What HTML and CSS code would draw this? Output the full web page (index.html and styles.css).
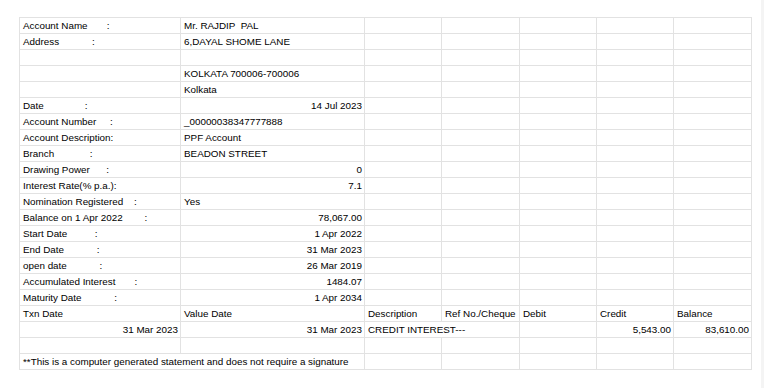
FILE: index.html
```html
<!DOCTYPE html>
<html>
<head>
<meta charset="utf-8">
<link rel="stylesheet" href="styles.css">
</head>
<body>
<table class="sheet">
<colgroup>
<col class="c1"><col class="c2"><col class="c3"><col class="c4"><col class="c5"><col class="c6"><col class="c7">
</colgroup>
<tr><td class="lbl">Account Name       :</td><td class="lbl">Mr. RAJDIP  PAL</td><td></td><td></td><td></td><td></td><td></td></tr>
<tr><td class="lbl">Address            :</td><td>6,DAYAL SHOME LANE</td><td></td><td></td><td></td><td></td><td></td></tr>
<tr><td></td><td></td><td></td><td></td><td></td><td></td><td></td></tr>
<tr><td></td><td>KOLKATA 700006-700006</td><td></td><td></td><td></td><td></td><td></td></tr>
<tr><td></td><td>Kolkata</td><td></td><td></td><td></td><td></td><td></td></tr>
<tr><td class="lbl">Date               :</td><td class="r">14 Jul 2023</td><td></td><td></td><td></td><td></td><td></td></tr>
<tr><td class="lbl">Account Number     :</td><td>_00000038347777888</td><td></td><td></td><td></td><td></td><td></td></tr>
<tr><td class="lbl">Account Description:</td><td>PPF Account</td><td></td><td></td><td></td><td></td><td></td></tr>
<tr><td class="lbl">Branch             :</td><td>BEADON STREET</td><td></td><td></td><td></td><td></td><td></td></tr>
<tr><td class="lbl">Drawing Power      :</td><td class="r">0</td><td></td><td></td><td></td><td></td><td></td></tr>
<tr><td class="lbl">Interest Rate(% p.a.):</td><td class="r">7.1</td><td></td><td></td><td></td><td></td><td></td></tr>
<tr><td class="lbl">Nomination Registered    :</td><td>Yes</td><td></td><td></td><td></td><td></td><td></td></tr>
<tr><td class="lbl">Balance on 1 Apr 2022        :</td><td class="r">78,067.00</td><td></td><td></td><td></td><td></td><td></td></tr>
<tr><td class="lbl">Start Date          :</td><td class="r">1 Apr 2022</td><td></td><td></td><td></td><td></td><td></td></tr>
<tr><td class="lbl">End Date            :</td><td class="r">31 Mar 2023</td><td></td><td></td><td></td><td></td><td></td></tr>
<tr><td class="lbl">open date            :</td><td class="r">26 Mar 2019</td><td></td><td></td><td></td><td></td><td></td></tr>
<tr><td class="lbl">Accumulated Interest       :</td><td class="r">1484.07</td><td></td><td></td><td></td><td></td><td></td></tr>
<tr><td class="lbl">Maturity Date            :</td><td class="r">1 Apr 2034</td><td></td><td></td><td></td><td></td><td></td></tr>
<tr><td>Txn Date</td><td>Value Date</td><td>Description</td><td>Ref No./Cheque</td><td>Debit</td><td>Credit</td><td>Balance</td></tr>
<tr><td class="r">31 Mar 2023</td><td class="r">31 Mar 2023</td><td colspan="2">CREDIT INTEREST---</td><td></td><td class="r">5,543.00</td><td class="r">83,610.00</td></tr>
<tr><td></td><td></td><td></td><td></td><td></td><td></td><td></td></tr>
<tr><td colspan="2">**This is a computer generated statement and does not require a signature</td><td></td><td></td><td></td><td></td><td></td></tr>
</table>
</body>
</html>
```

FILE: styles.css
```css
html, body {
  margin: 0;
  padding: 0;
  background: #ffffff;
}
body {
  padding: 17px 0 0 19px;
  font-family: "Liberation Sans", Arial, sans-serif;
  font-size: 9.85px;
  color: #000000;
}
body::after {
  content: "";
  position: fixed;
  top: 0;
  right: 0;
  width: 3px;
  height: 100%;
  background: #f4f4f4;
}
.sheet {
  border-collapse: collapse;
  table-layout: fixed;
  width: 732px;
}
.c1 { width: 161px; }
.c2 { width: 184px; }
.c3 { width: 77px; }
.c4 { width: 78px; }
.c5 { width: 77px; }
.c6 { width: 77px; }
.c7 { width: 78px; }
.sheet tr {
  height: 16px;
}
.sheet td {
  border: 1px solid #e2e2e2;
  padding: 0 2px 0 3px;
  height: 15px;
  line-height: 15px;
  white-space: nowrap;
  overflow: hidden;
  vertical-align: middle;
  box-sizing: border-box;
}
.sheet td.lbl {
  white-space: pre;
}
.sheet td.r {
  text-align: right;
}
```
